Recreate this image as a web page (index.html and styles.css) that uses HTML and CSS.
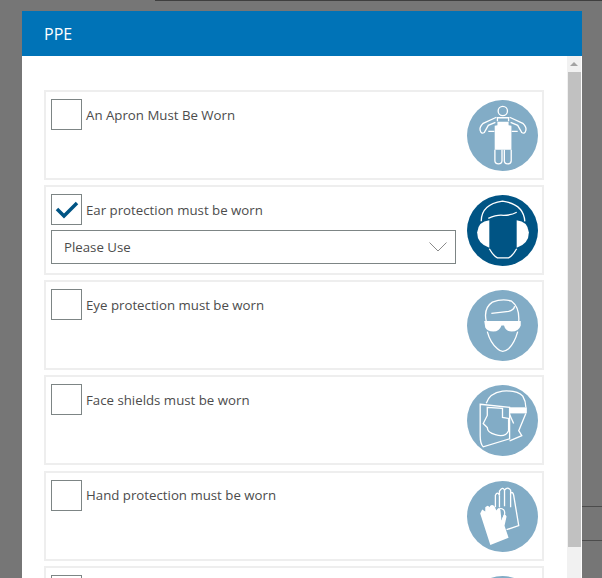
FILE: index.html
```html
<!DOCTYPE html>
<html lang="en">
<head>
  <meta charset="UTF-8" />
  <meta name="viewport" content="width=device-width, initial-scale=1.0" />
  <title>PPE</title>
  <link rel="stylesheet" href="styles.css">
</head>
<body>

  <!-- Bits of the page behind the backdrop -->
  <div class="behind-top"></div>
  <div class="behind-line behind-line-1"></div>
  <div class="behind-line behind-line-2"></div>

  <div class="dialog">
    <div class="dialog-header">PPE</div>
    <div class="dialog-body">
      <div class="ppe-list">

        <div class="ppe-card">
          <div class="ppe-main">
            <div class="ppe-row">
              <span class="check"></span>
              <span class="ppe-label">An Apron Must Be Worn</span>
            </div>
          </div>
          <svg class="ppe-icon" viewBox="0 0 70 70">
            <circle class="disc" cx="35" cy="35" r="35"/>
            <g class="line">
              <circle cx="35.3" cy="10.8" r="4.6"/>
              <path d="M29 17 L16 23 Q12 27 13 30 Q14 34 17 32 L21 25 L28 22"/>
              <path d="M42 17 L55 23 Q59 27 58 30 Q57 34 54 32 L50 25 L43 22"/>
              <path d="M21 31 H27 M50 31 H44"/>
              <path d="M30 21 V17.500 H41 V21"/>
              <path d="M27.500 49 V60 Q27.500 63 31 63 Q34.500 63 34.500 60 V49"/>
              <path d="M36.800 49 V60 Q36.800 63 40 63 Q43.600 63 43.600 60 V49"/>
            </g>
            <path class="fill" d="M30 21.500 H41 V25 L43.800 25.500 V49 H27.300 V25.500 L30 25 Z"/>
          </svg>
        </div>

        <div class="ppe-card">
          <div class="ppe-main">
            <div class="ppe-row">
              <span class="check">
                <svg class="tick" viewBox="0 0 24 18"><path d="M2 8 L9 15 L22 2"/></svg>
              </span>
              <span class="ppe-label">Ear protection must be worn</span>
            </div>
            <div class="ppe-select">
              <span>Please Use</span>
              <svg class="chevron" viewBox="0 0 18 10"><path d="M0.500 0.500 L9 9 L17.500 0.500"/></svg>
            </div>
          </div>
          <svg class="ppe-icon" viewBox="0 0 70 70">
            <circle class="disc-dark" cx="35" cy="35" r="35"/>
            <path class="fill" d="M22 25 Q11 26 10 37 Q10 48 22 52 Z"/>
            <path class="fill" d="M49 25 Q60 26 61 37 Q61 48 49 52 Z"/>
            <g class="line">
              <path d="M14 26 Q14 9 35 6 Q56 9 57 26"/>
              <path d="M21 23 Q30 19 36 20 Q44 20 49 17"/>
              <path d="M22 53 Q26 60 30 62 H41 Q45 60 49 53"/>
            </g>
          </svg>
        </div>

        <div class="ppe-card">
          <div class="ppe-main">
            <div class="ppe-row">
              <span class="check"></span>
              <span class="ppe-label">Eye protection must be worn</span>
            </div>
          </div>
          <svg class="ppe-icon" viewBox="0 0 70 70">
            <circle class="disc" cx="35" cy="35" r="35"/>
            <g class="line">
              <path d="M19 31 Q16 18 25 12 Q35 8 44 11 Q52 17 51 31"/>
              <path d="M24 23 Q33 22 41 21 Q46 20 47 16"/>
              <path d="M20 41 Q23 52 30 58 Q35 63 41 58 Q47 52 50 41"/>
            </g>
            <path class="fill" d="M17 30.500 H53 V35 Q51 41 44 41 Q38 41 36.500 35 H34 Q32 41 26 41 Q20 41 18 37 Z"/>
          </svg>
        </div>

        <div class="ppe-card">
          <div class="ppe-main">
            <div class="ppe-row">
              <span class="check"></span>
              <span class="ppe-label">Face shields must be worn</span>
            </div>
          </div>
          <svg class="ppe-icon" viewBox="0 0 70 70">
            <circle class="disc" cx="35" cy="35" r="35"/>
            <g class="line">
              <path d="M19 18 Q22 8 35 6 Q50 5 55 11 Q58 16 58 22"/>
              <path d="M13 19 L42 22 V53 L16 61 Q13 58 13 50 Z"/>
              <path d="M20 22 L35 23 V32 L41 33 V45 Q38 52 28 49 Q20 47 20 42 L16 38 L20 30 Z"/>
              <path d="M58 28 L51 45 L54 50 L42 55"/>
              <path d="M42 29 L46 38"/>
            </g>
            <rect class="fill" x="42" y="22" width="17" height="6"/>
          </svg>
        </div>

        <div class="ppe-card">
          <div class="ppe-main">
            <div class="ppe-row">
              <span class="check"></span>
              <span class="ppe-label">Hand protection must be worn</span>
            </div>
          </div>
          <svg class="ppe-icon" viewBox="0 0 70 70">
            <circle class="disc" cx="35" cy="35" r="35"/>
            <g class="line">
              <path d="M28 26 V14 Q30 10 32 14 V10 Q35 5 37 9 Q40 5 43 9 V12 Q45 10 46 14 L51 44 L39 48"/>
              <path d="M32 14 V26 M37 9 V25 M43 12 V26"/>
              <path d="M32 27 Q38 27 37 33 L35 38"/>
            </g>
            <path class="fill" d="M13 32 L15 28 L18 30 L18 26 Q21 23 22 26 Q24 22 27 25 L29 29 Q32 24 33 29 L34 39 L36 34 Q38 32 39 35 L37 44 L41 56 L23 63 Z"/>
          </svg>
        </div>

        <div class="ppe-card">
          <div class="ppe-main">
            <div class="ppe-row">
              <span class="check"></span>
            </div>
          </div>
          <svg class="ppe-icon" viewBox="0 0 70 70">
            <circle class="disc" cx="35" cy="35" r="35"/>
          </svg>
        </div>

      </div>

      <!-- Scrollbar -->
      <div class="scrollbar">
        <div class="scroll-btn"><span class="scroll-arrow"></span></div>
        <div class="scroll-thumb"></div>
      </div>
    </div>
  </div>

</body>
</html>
```

FILE: styles.css
```css
html, body {
  height: 100%;
}

body {
  margin: 0;
  overflow: hidden;
  position: relative;
  background-color: #767676;
  font-family: "Open Sans", "Noto Sans", sans-serif;
  color: #4c4c4c;
}

/* Page behind the backdrop */
.behind-top {
  position: absolute;
  top: 0;
  left: 155px;
  right: 0;
  height: 1px;
  background-color: #3f3f3f;
}

.behind-line {
  position: absolute;
  left: 582px;
  right: 0;
  height: 1px;
  background-color: #4c4c4c;
}

.behind-line-1 {
  top: 506px;
}

.behind-line-2 {
  top: 540px;
}

/* Dialog */
.dialog {
  position: relative;
  width: 560px;
  height: 567px;
  margin: 11px 0 0 22px;
  display: flex;
  flex-direction: column;
  background-color: #fff;
}

.dialog-header {
  height: 45px;
  flex-shrink: 0;
  display: flex;
  align-items: center;
  padding-left: 22px;
  background-color: #0073b7;
  color: #fff;
  font-size: 16px;
}

.dialog-body {
  flex: 1;
  min-height: 0;
  display: flex;
}

.ppe-list {
  flex: 1;
  min-width: 0;
  overflow: hidden;
  display: flex;
  flex-direction: column;
  gap: 5.15px;
  padding: 34px 23px 0 22px;
}

/* One row of the list */
.ppe-card {
  box-sizing: border-box;
  height: 90px;
  flex-shrink: 0;
  display: flex;
  justify-content: space-between;
  padding: 7px 4px 0 5px;
  border: 2px solid #eee;
}

.ppe-main {
  width: 405px;
  display: flex;
  flex-direction: column;
  gap: 5px;
}

.ppe-row {
  height: 31px;
  display: flex;
  gap: 4px;
}

.ppe-label {
  padding-top: 0.5px;
  font-size: 13.25px;
  line-height: 31px;
}

.check {
  box-sizing: border-box;
  width: 31px;
  height: 31px;
  flex-shrink: 0;
  display: flex;
  align-items: center;
  justify-content: center;
  border: 1px solid #7d8585;
}

.tick {
  width: 24px;
  height: 18px;
  fill: none;
  stroke: #005484;
  stroke-width: 3.5;
}

.ppe-select {
  box-sizing: border-box;
  height: 34px;
  display: flex;
  align-items: center;
  justify-content: space-between;
  padding: 0 8px 0 12px;
  border: 1px solid #7d8585;
  font-size: 13.25px;
}

.chevron {
  width: 18px;
  height: 10px;
  fill: none;
  stroke: #8a8a8a;
  stroke-width: 1;
}

/* PPE signs */
.ppe-icon {
  width: 71px;
  height: 71px;
  flex-shrink: 0;
  margin-top: 1px;
}

.disc {
  fill: #82acc6;
}

.disc-dark {
  fill: #005484;
}

.fill {
  fill: #fff;
}

.line {
  fill: none;
  stroke: #fff;
  stroke-width: 1.3;
}

/* Scrollbar */
.scrollbar {
  width: 14px;
  margin-right: 1px;
  flex-shrink: 0;
  display: flex;
  flex-direction: column;
  background-color: #f1f1f1;
}

.scroll-btn {
  height: 16px;
  display: flex;
  align-items: center;
  justify-content: center;
}

.scroll-arrow {
  width: 0;
  height: 0;
  border-left: 4px solid transparent;
  border-right: 4px solid transparent;
  border-bottom: 4px solid #a3a3a3;
}

.scroll-thumb {
  height: 475px;
  margin-left: 1px;
  background-color: #c1c1c1;
}
```
